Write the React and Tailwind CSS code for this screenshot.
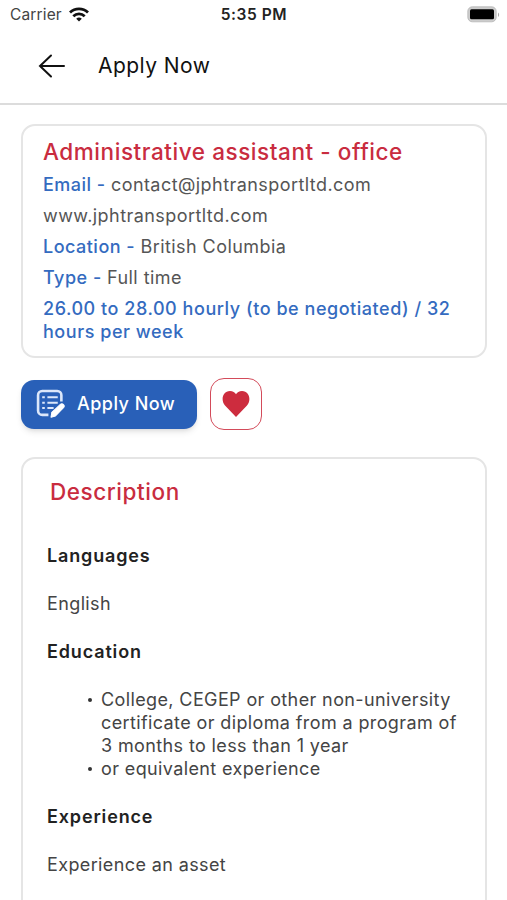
const details = [
  { label: "Email", value: "contact@jphtransportltd.com" },
  { value: "www.jphtransportltd.com" },
  { label: "Location", value: "British Columbia" },
  { label: "Type", value: "Full time" },
];

const StatusBar = () => (
  <div className="flex h-[29px] items-center justify-between pl-[10px] pr-[7px] text-[#222]">
    <div className="flex w-[160px] items-center gap-[7px]">
      <span className="text-[15.5px] tracking-[0.15px] text-[#444]">Carrier</span>
      <svg width="20" height="15" viewBox="0 0 20 15" fill="none" stroke="#111" strokeWidth="2.8">
        <path d="M1 5.5a13 13 0 0 1 18 0" />
        <path d="M4.3 9.200a8.300 8.300 0 0 1 11.400 0" />
        <path d="M10 14.600 7.200 11.800a4.200 4.200 0 0 1 5.600 0z" fill="#111" stroke="none" />
      </svg>
    </div>
    <span className="-ml-[2px] text-[15.5px] font-semibold tracking-[0.55px]">5:35 PM</span>
    <div className="flex w-[160px] justify-end">
      <svg width="33" height="17" viewBox="0 0 33 17">
        <rect x="0.8" y="0.8" width="28.400" height="15" rx="4.500" fill="#ccc" stroke="#b5b5b5" strokeWidth="0.8" />
        <rect x="3" y="3.300" width="24" height="10" rx="1.500" fill="#000" />
        <path d="M31 6.500v4.500c1.500-.8 1.500-3.700 0-4.500z" fill="#aaa" />
      </svg>
    </div>
  </div>
);

const Header = () => (
  <header className="flex h-[76px] items-center border-b-2 border-[#dcdcdc] pl-[38px]">
    <svg
      width="28"
      height="24"
      viewBox="0 0 28 24"
      fill="none"
      stroke="#111"
      strokeWidth="2"
      strokeLinecap="round"
    >
      <path d="M26 12H2M13 1.500 2 12l11 10.500" />
    </svg>
    <h1 className="ml-[32px] text-[21px] tracking-[0.45px] text-[#111]">Apply Now</h1>
  </header>
);

const App = () => {
  return (
    <div className="h-[900px] w-[507px] overflow-hidden bg-white font-[Inter,sans-serif] text-[#444]">
      <StatusBar />
      <Header />
      <main className="pt-[19px] pr-[20px] pl-[21px]">
        <section className="h-[234px] rounded-[14px] border-2 border-[#e5e5e5] px-[20px] pt-[9px]">
          <h2 className="text-[22.5px] leading-[34px] font-medium tracking-[0.56px] whitespace-nowrap text-[#c92c3f]">
            Administrative assistant - office
          </h2>
          {details.map((item) => (
            <p key={item.value} className="text-[18px] leading-[31px] tracking-[0.44px] text-[#555]">
              {item.label && <span className="font-medium tracking-[0.48px] text-[#346bc0]">{item.label} - </span>}
              {item.value}
            </p>
          ))}
          <p className="mt-[4px] text-[18px] leading-[23px] font-medium tracking-[0.54px] text-[#346bc0]">
            26.00 to 28.00 hourly (to be negotiated) / 32
            <br />
            hours per week
          </p>
        </section>

        <div className="mt-[20px] flex items-center gap-[13px]">
          <button className="flex h-[49px] w-[176px] items-center rounded-[13px] bg-[#2960b8] pb-px pl-[15px] text-white shadow-md">
            <svg width="29" height="29" viewBox="0 0 28 28" fill="none" stroke="#dce7fa" strokeWidth="2.5">
              <path d="M24.500 12V6a4 4 0 0 0-4-4H6a4 4 0 0 0-4 4v15a4 4 0 0 0 4 4h6" />
              <path d="M6 8h2.500M11 8h10M6 13.200h2.500M11 13.200h10M6 18.400h2.500M11 18.400h6" strokeWidth="2" />
              <path
                d="m14.500 27.200.8-4.700 8.500-7.800c1.800-1.500 4.500 1.200 3 3L18.800 26z"
                fill="#fff"
                stroke="#fff"
                strokeWidth="1"
                strokeLinejoin="round"
              />
            </svg>
            <span className="ml-[12px] text-[18px] font-medium tracking-[0.48px]">Apply Now</span>
          </button>
          <button className="flex size-[52px] items-center justify-center rounded-[14px] border-[1.5px] border-[#d34b5a]">
            <svg width="28" height="26" viewBox="0 0 28 26" fill="#cd2c3e">
              <path d="M14 26 3 14.500C-1.500 9.500.5 0 8 0c2.800 0 5 1.300 6 3.200C15 1.300 17.200 0 20 0c7.500 0 9.500 9.500 5 14.500z" />
            </svg>
          </button>
        </div>

        <section className="mt-[27px] h-[480px] rounded-[14px] border-2 border-[#e5e5e5] px-[24px] pt-[18px] text-[18px] leading-[23px] tracking-[0.38px]">
          <h2 className="ml-[3px] text-[22.5px] leading-[30px] font-medium tracking-[0.56px] text-[#c92c3f]">
            Description
          </h2>
          <h3 className="mt-[37px] font-semibold tracking-[0.85px] text-[#222]">Languages</h3>
          <p className="mt-[25px]">English</p>
          <h3 className="mt-[25px] font-semibold tracking-[0.85px] text-[#222]">Education</h3>
          <ul className="mt-[25px] list-none pl-[38px]">
            <li className="flex">
              <span className="mt-[10px] mr-[9px] ml-[3px] size-[4px] shrink-0 rounded-full bg-[#333]" />
              <span className="whitespace-nowrap">
                College, CEGEP or other non-university
                <br />
                certificate or diploma from a program of
                <br />3 months to less than 1 year
              </span>
            </li>
            <li className="flex">
              <span className="mt-[10px] mr-[9px] ml-[3px] size-[4px] shrink-0 rounded-full bg-[#333]" />
              <span>or equivalent experience</span>
            </li>
          </ul>
          <h3 className="mt-[25px] font-semibold tracking-[0.85px] text-[#222]">Experience</h3>
          <p className="mt-[25px]">Experience an asset</p>
        </section>
      </main>
    </div>
  );
};

export default App;
